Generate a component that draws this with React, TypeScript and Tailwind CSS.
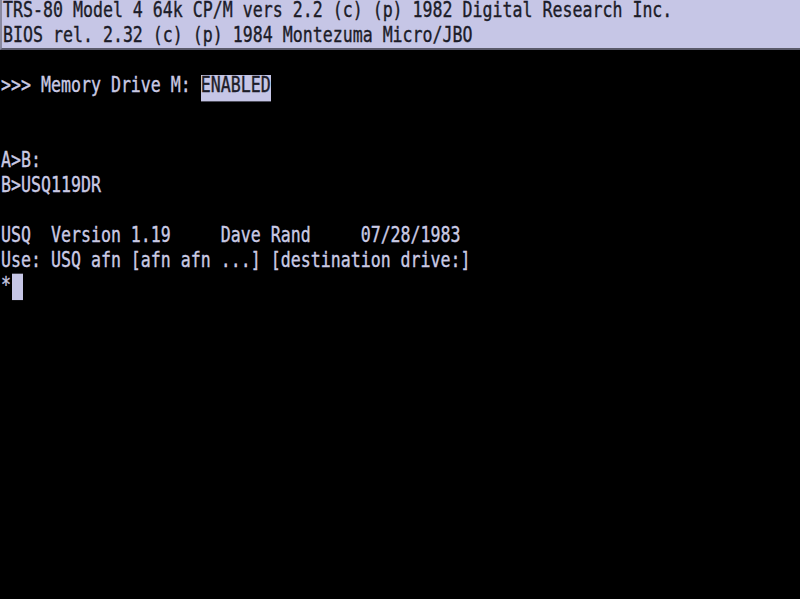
import React from "react";

const Line = ({ children, className = "" }: { children?: React.ReactNode; className?: string }) => (
  <div className={"h-[25px] whitespace-pre " + className}>
    <span className="inline-block origin-top [transform:scaleY(1.32)] pl-[1px]">{children}</span>
  </div>
);

export default function App() {
  return (
    <div
      className="w-[800px] h-[599px] bg-black overflow-hidden text-[16.6px] leading-none text-[#cacae4] [-webkit-text-stroke:0.3px_currentColor]"
      style={{ fontFamily: '"DejaVu Sans Mono", "Liberation Mono", monospace' }}
    >
      <div className="bg-[#c6c6e6] text-[#1c1c28] h-[50px] border-b-2 border-[#5a5a6a] border-l-2 border-l-[#8a8aa0]">
        <Line>TRS-80 Model 4 64k CP/M vers 2.2 (c) (p) 1982 Digital Research Inc.</Line>
        <Line>BIOS rel. 2.32 (c) (p) 1984 Montezuma Micro/JBO</Line>
      </div>
      <div className="h-[25px]" />
      <Line>
        {">>> Memory Drive M: "}
        <span className="bg-[#c6c6e6] text-[#1c1c28] inline-block h-[19.5px] align-top">ENABLED</span>
      </Line>
      <Line />
      <Line />
      <Line>A&gt;B:</Line>
      <Line>B&gt;USQ119DR</Line>
      <Line />
      <Line>USQ  Version 1.19     Dave Rand     07/28/1983</Line>
      <Line>Use: USQ afn [afn afn ...] [destination drive:]</Line>
      <Line>
        *<span className="inline-block w-[11px] h-[20px] bg-[#c6c6e6] align-top ml-[1px] mt-[-1px]" />
      </Line>
    </div>
  );
}
